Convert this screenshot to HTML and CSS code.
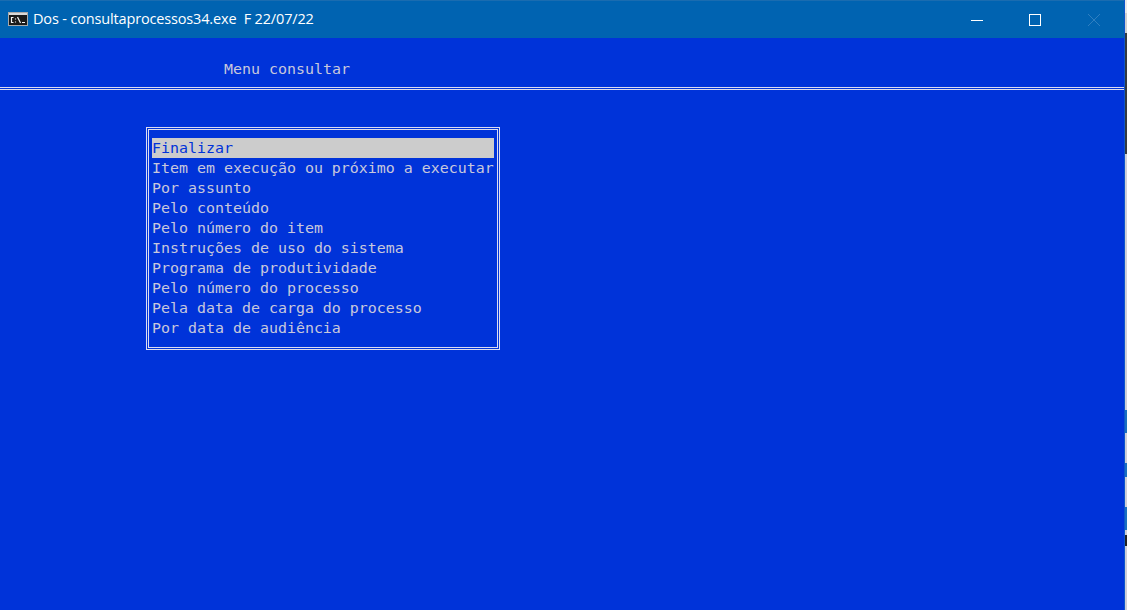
FILE: index.html
```html
<!DOCTYPE html>
<html lang="pt">
<head>
<meta charset="utf-8">
<title>Dos - consultaprocessos34.exe F 22/07/22</title>
<link rel="stylesheet" href="styles.css">
</head>
<body>
<div class="window">
  <div class="main">
    <header class="titlebar">
      <svg class="app-icon" width="20" height="14" viewBox="0 0 20 14">
        <rect x="0.5" y="0.5" width="19" height="13" fill="#1a1a1a" stroke="#a8a8a8"/>
        <rect x="1" y="1" width="18" height="2" fill="#d8d8d8"/>
        <path d="M5.5 5.5h-2v5h2M7.5 6.5v1M7.5 9.5v1M9.5 5l3 6M14 10.5h3" stroke="#f4f4f4" stroke-width="1.2" fill="none"/>
      </svg>
      <span class="title">Dos - consultaprocessos34.exe&nbsp; F 22/07/22</span>
      <div class="controls">
        <span class="ctl"><svg width="12" height="12" viewBox="0 0 12 12"><path d="M0 6.5h12" stroke="#fff"/></svg></span>
        <span class="ctl"><svg width="12" height="12" viewBox="0 0 12 12"><rect x="0.5" y="0.5" width="11" height="11" fill="none" stroke="#fff"/></svg></span>
        <span class="ctl"><svg width="12" height="12" viewBox="0 0 12 12"><path d="M0 0l12 12M12 0L0 12" stroke="#2f7fc0" fill="none"/></svg></span>
      </div>
    </header>
    <main class="console">
      <div class="heading">Menu consultar</div>
      <div class="rule"></div>
      <nav class="menu">
        <div class="item selected">Finalizar</div>
        <div class="item">Item em execução ou próximo a executar</div>
        <div class="item">Por assunto</div>
        <div class="item">Pelo conteúdo</div>
        <div class="item">Pelo número do item</div>
        <div class="item">Instruções de uso do sistema</div>
        <div class="item">Programa de produtividade</div>
        <div class="item">Pelo número do processo</div>
        <div class="item">Pela data de carga do processo</div>
        <div class="item">Por data de audiência</div>
      </nav>
    </main>
  </div>
  <aside class="edge">
    <div class="edge-top"></div>
    <div class="edge-soft"></div>
    <div class="edge-dark"></div>
    <div class="edge-gray edge-long"></div>
    <div class="edge-blue edge-b1"></div>
    <div class="edge-gray edge-gap"></div>
    <div class="edge-blue edge-b2"></div>
    <div class="edge-gray edge-gap"></div>
    <div class="edge-blue edge-b1"></div>
    <div class="edge-gray edge-short"></div>
    <div class="edge-mark"></div>
    <div class="edge-gray edge-rest"></div>
  </aside>
</div>
</body>
</html>
```
FILE: styles.css
```css
* { box-sizing: border-box; }
html, body { margin: 0; height: 100%; overflow: hidden; }
.window { width: 1127px; height: 610px; display: flex; background: #0033d9; }
.main { flex: 1; min-width: 0; display: flex; flex-direction: column; border-right: 1px solid #0d55cc; }
.titlebar {
  height: 38px;
  flex: none;
  display: flex;
  align-items: center;
  background: #0063b1;
  border-top: 1px solid #1a6cb0;
  padding-left: 8px;
  color: #fff;
  font: 14.5px/1 "Open Sans", sans-serif;
}
.app-icon { flex: none; margin-right: 5px; margin-top: -1px; }
.title { white-space: pre; margin-top: -1px; letter-spacing: -0.155px; }
.controls { margin-left: auto; display: flex; padding-right: 1px; }
.ctl { width: 58.5px; height: 37px; display: flex; align-items: center; justify-content: center; }
.console {
  flex: 1;
  display: flex;
  flex-direction: column;
  align-items: flex-start;
  background: #0033d9;
  color: #c8c8dc;
  font: 14.95px/20px "DejaVu Sans Mono", monospace;
}
.heading { margin: 21px 0 0 224px; white-space: pre; }
.rule {
  align-self: stretch;
  height: 3px;
  margin-top: 8px;
  border-top: 1px solid #dcdcf0;
  border-bottom: 1px solid #dcdcf0;
}
.menu {
  margin: 37px 0 0 146px;
  width: 354px;
  padding: 8px 3px 9px 3px;
  border: 3px double #dcdcf0;
}
.item { height: 20px; white-space: pre; }
.selected { background: #cccccc; color: #0033d9; }
.edge { flex: none; width: 2px; display: flex; flex-direction: column; }
.edge-top { height: 13px; background: #e9e9e9; }
.edge-soft { height: 20px; background: #d0d0d0; }
.edge-dark { height: 121px; background: #343a40; }
.edge-gray { background: #cfcfd6; }
.edge-long { height: 256px; }
.edge-blue { background: #1a6fc0; }
.edge-b1 { height: 23px; }
.edge-b2 { height: 14px; }
.edge-gap { height: 30px; }
.edge-short { height: 5px; }
.edge-mark { height: 11px; background: #222; }
.edge-rest { flex: 1; }
```
